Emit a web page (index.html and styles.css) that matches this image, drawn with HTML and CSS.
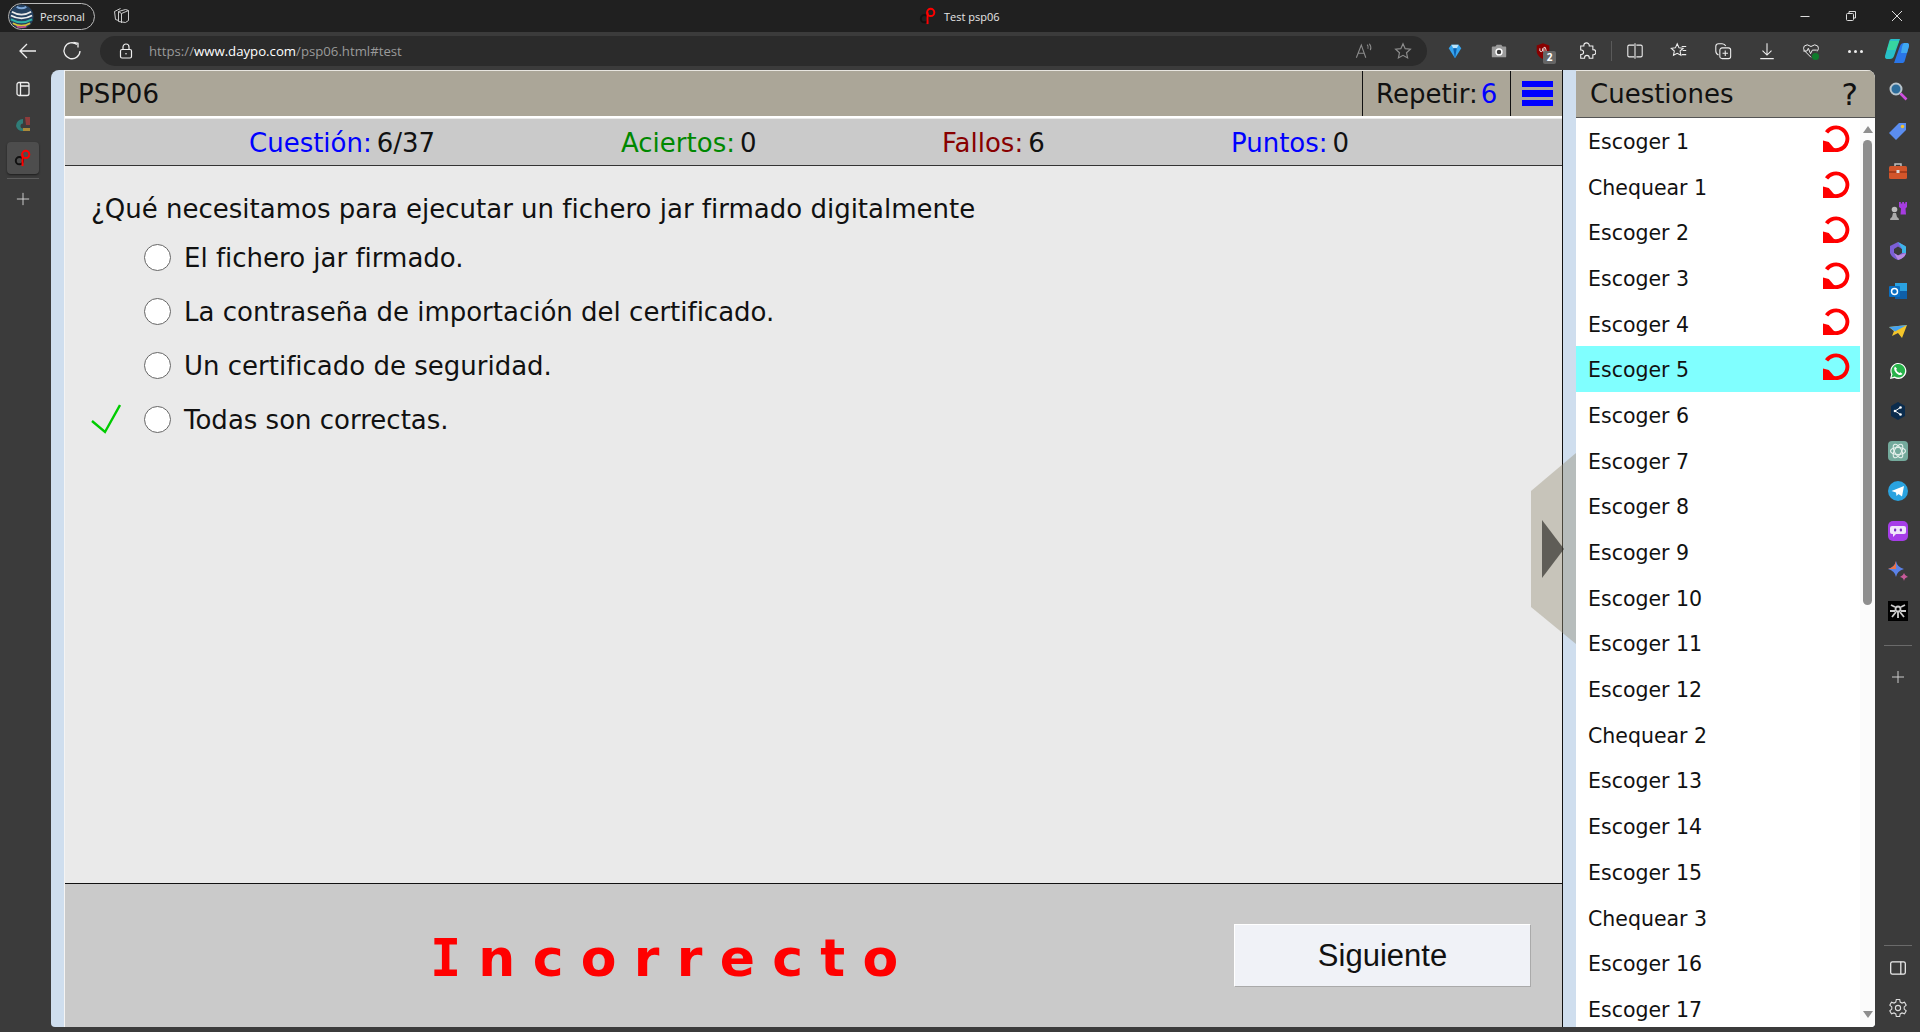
FILE: index.html
```html
<!DOCTYPE html>
<html lang="es">
<head>
<meta charset="UTF-8" />
<title>Test psp06</title>
<link rel="stylesheet" href="styles.css">
</head>
<body>
<svg class="defs" width="0" height="0">
  <symbol id="redo" viewBox="0 0 28 28">
    <path d="M3.700 7.200A11.800 11.800 0 1 1 8 24.200" fill="none" stroke="#f00" stroke-width="4"/>
    <path d="M0 15.500L6 17l6 7v3.500H0z" fill="#f00"/>
  </symbol>
  <symbol id="logo" viewBox="0 0 20 20">
    <circle cx="6" cy="13" r="4" fill="none" stroke="#111" stroke-width="2.2"/>
    <circle cx="13" cy="6" r="4" fill="none" stroke="#f00" stroke-width="2.2"/>
    <path d="M9.500 19L9.500 6" stroke="#f00" stroke-width="2.2"/>
  </symbol>
</svg>

<!-- window title bar -->
<div class="titlebar">
  <div class="profile">
    <svg class="avatar" viewBox="0 0 26 26">
      <circle cx="13" cy="13" r="12.500" fill="#25405f"/>
      <path d="M8 3q5 3 10 0" fill="none" stroke="#7fa8d8" stroke-width="2"/>
      <path d="M3 8q10 6 20 0" fill="none" stroke="#e8e8e8" stroke-width="1.800"/>
      <path d="M2 12q11 6 22 0" fill="none" stroke="#f0f0f0" stroke-width="1.800"/>
      <path d="M2 16q11 6 22 0" fill="none" stroke="#2fb4a8" stroke-width="2"/>
      <path d="M4 20q9 5 18 0" fill="none" stroke="#d9c23a" stroke-width="2"/>
      <path d="M8 23.500q5 1.500 10 0" fill="none" stroke="#d0508c" stroke-width="1.600"/>
    </svg>
    <span>Personal</span>
  </div>
  <svg class="tabs-icon" viewBox="0 0 18 18" fill="none" stroke="#ccc" stroke-width="1">
    <path d="M6.500 4.500l7-2 3 1v10l-3 2-7-1z"/><path d="M6.500 4.500l3 2v9.500M9.500 6.500l7-3"/><path d="M6.500 13.500l-3-1-1-8 6-3"/>
  </svg>
  <div class="win-title">
    <svg class="win-logo"><use href="#logo"/></svg>
    <span>Test psp06</span>
  </div>
  <div class="win-controls">
    <svg viewBox="0 0 12 12" stroke="#ddd" fill="none"><path d="M1.500 6.500h9"/></svg>
    <svg viewBox="0 0 12 12" stroke="#ddd" fill="none"><rect x="1.500" y="3.500" width="7" height="7" rx="1"/><path d="M4 3V1.500h6.500V8H9"/></svg>
    <svg viewBox="0 0 12 12" stroke="#ddd" fill="none"><path d="M1 1l10 10M11 1L1 11"/></svg>
  </div>
</div>

<!-- address bar row -->
<div class="toolbar">
  <div class="nav-btns">
    <svg viewBox="0 0 20 20" fill="none" stroke="#eee" stroke-width="1.300"><path d="M18 10H2M9 3l-7 7 7 7"/></svg>
    <svg viewBox="0 0 20 20" fill="none" stroke="#eee" stroke-width="1.300"><path d="M15 3.500A8 8 0 1 0 18 10"/><path d="M11.500 1.500l4.500.7v4.300" /></svg>
  </div>
  <div class="address">
    <svg class="lock" viewBox="0 0 16 16" fill="none" stroke="#eee" stroke-width="1.200"><rect x="2.500" y="6.500" width="11" height="8.500" rx="1.500"/><path d="M5 6.500V4a3 3 0 0 1 6 0v2.500"/><circle cx="8" cy="10.700" r=".8" fill="#eee" stroke="none"/></svg>
    <span class="url">https://<b>www.daypo.com</b>/psp06.html#test</span>
    <svg class="addr-icon" viewBox="0 0 20 20" fill="none" stroke="#8c8c8c" stroke-width="1.200"><path d="M1.500 17.500L7 3.500l5 14M3.500 12.500h7"/><path d="M13.500 3q2 2 .8 4.500M16 2q2.600 3.500 1 7"/></svg>
    <svg class="addr-icon" viewBox="0 0 20 20" fill="none" stroke="#8c8c8c" stroke-width="1.300"><path d="M10 2l2.400 5.400 5.800.6-4.300 3.900 1.200 5.800L10 14.800l-5.100 2.900 1.200-5.800L1.800 8l5.800-.6z"/></svg>
  </div>
  <div class="tools">
    <svg viewBox="0 0 20 20"><path d="M3 7l3-4h8l3 4-7 11z" fill="#35a4ef"/><path d="M6 3h8l-2 4H8z" fill="#b9e4fb"/><path d="M8 7h4l-2 11z" fill="#0d5fae"/></svg>
    <svg viewBox="0 0 20 20"><path d="M2 6a1 1 0 0 1 1-1h3l1.500-2h5L14 5h3a1 1 0 0 1 1 1v10a1 1 0 0 1-1 1H3a1 1 0 0 1-1-1z" fill="#9a9a9a"/><circle cx="10" cy="11" r="3.300" fill="#3b3b3b" stroke="#fff" stroke-width="1.600"/></svg>
    <div class="ublock">
      <svg viewBox="0 0 20 20"><path d="M10 1.500l7 2.500v7q-1 5-7 8-6-3-7-8V4z" fill="#800"/><path d="M6.500 7v3q1.500 1.500 3 0V7M11 6v5h1.500q2-1 0-5z" fill="none" stroke="#eee" stroke-width="1"/></svg>
      <span class="badge">2</span>
    </div>
    <svg viewBox="0 0 20 20" fill="none" stroke="#eee" stroke-width="1.200"><path d="M6.500 4.500V4a3 3 0 0 1 6 0v.5h4v4h.5a2.800 2.800 0 0 1 0 5.600h-.5V18h-4v-.5a2.600 2.600 0 0 0-5.200 0v.5H3v-4.200h.7a2.500 2.500 0 0 0 0-5H3V4.500z"/></svg>
    <i class="tool-sep"></i>
    <svg viewBox="0 0 20 20" fill="none" stroke="#eee" stroke-width="1.200"><path d="M9 3.500H3.500a1.500 1.500 0 0 0-1.500 1.500v10a1.500 1.500 0 0 0 1.500 1.500H9M11.500 3.500H16.500a1.500 1.500 0 0 1 1.500 1.500v10a1.500 1.500 0 0 1-1.500 1.500h-5M10 1.500v17"/></svg>
    <svg viewBox="0 0 20 20" fill="none" stroke="#eee" stroke-width="1.200"><path d="M8 2l2 4.500 4.500.5-3.300 3 .9 4.700L8 12.500l-4.100 2.200.9-4.700L1.500 7 6 6.500z"/><path d="M13 5h5M14 9.500h4M13 14h5"/></svg>
    <svg viewBox="0 0 20 20" fill="none" stroke="#eee" stroke-width="1.200"><path d="M5 14.500Q2 13 2 10V5q0-3 3-3h4q3 0 4 2.500"/><rect x="6.500" y="6.500" width="12" height="12" rx="2.500"/><path d="M12.500 9.500v6M9.500 12.500h6"/></svg>
    <svg viewBox="0 0 20 20" fill="none" stroke="#eee" stroke-width="1.200"><path d="M10 1.500v13M5 9.500l5 5 5-5M2.500 18.500h15"/></svg>
    <div class="health">
      <svg viewBox="0 0 20 20" fill="none" stroke="#eee" stroke-width="1.100"><path d="M10 17L2.500 9.500Q1 7 2.500 4.500 5.500 1.500 10 5q4.500-3.500 7.500-.5 1.500 2.500 0 5l-1 1"/><path d="M1.500 10h4l1.500-3 2.500 6 2-4h5"/></svg>
      <i class="health-dot"></i>
    </div>
    <span class="dots"><i></i><i></i><i></i></span>
    <svg class="copilot" viewBox="0 0 26 26"><path d="M7 1h9l-6 17q-1 3-4 3H2.500q-2-.5-1.500-3L5 4q.5-3 2-3z" fill="#28bfc9"/><path d="M6 3h9l-4 9H3z" fill="#37d6a0"/><path d="M19 25h-9l6-17q1-3 4-3h3.500q2 .5 1.500 3L21 22q-.5 3-2 3z" fill="#2a76e8"/><path d="M20 5h3.500q2 .5 1.500 3l-2 7h-6l1-6q.5-3 2-4z" fill="#3fa8f0"/></svg>
  </div>
</div>

<div class="browser-body">
  <!-- vertical tabs -->
  <div class="side-left">
    <svg class="side-tab" viewBox="0 0 16 16" fill="none" stroke="#eee" stroke-width="1.300"><rect x="2" y="1.500" width="12" height="13" rx="2"/><path d="M5.500 1.500v13M5.500 5h8.500" /></svg>
    <svg class="side-tab" viewBox="0 0 16 16"><path d="M1 10a7 7 0 0 1 7-7v4.500a2.500 2.500 0 0 0 0 5V15a7 7 0 0 1-7-5z" fill="#2f7d78"/><path d="M10 1h5v8h-4z" fill="#8e3b3b"/><path d="M8 12h7v3H8z" fill="#a98a3a"/></svg>
    <div class="side-active"><svg class="side-tab"><use href="#logo"/></svg></div>
    <i class="side-sep"></i>
    <svg class="side-plus" viewBox="0 0 16 16" stroke="#ddd" stroke-width="1"><path d="M8 1v14M1 8h14"/></svg>
  </div>

  <div class="page">
    <div class="main">
      <div class="head">
        <div class="head-title">PSP06</div>
        <div class="head-repeat">Repetir:<span class="blue">6</span></div>
        <div class="head-menu"><i></i><i></i><i></i></div>
      </div>
      <div class="stats">
        <div class="stat s1"><span class="blue">Cuestión:</span>6/37</div>
        <div class="stat s2"><span class="green">Aciertos:</span>0</div>
        <div class="stat s3"><span class="dred">Fallos:</span>6</div>
        <div class="stat"><span class="blue">Puntos:</span>0</div>
      </div>
      <div class="content">
        <div class="question">¿Qué necesitamos para ejecutar un fichero jar firmado digitalmente</div>
        <label class="answer"><span class="mark"></span><input type="radio" name="r"><span class="answer-text">El fichero jar firmado.</span></label>
        <label class="answer"><span class="mark"></span><input type="radio" name="r"><span class="answer-text">La contraseña de importación del certificado.</span></label>
        <label class="answer"><span class="mark"></span><input type="radio" name="r"><span class="answer-text">Un certificado de seguridad.</span></label>
        <label class="answer"><span class="mark"><svg viewBox="0 0 30 30" fill="none" stroke="#0c0" stroke-width="2.400"><path d="M1 17l13 11L29 1"/></svg></span><input type="radio" name="r"><span class="answer-text">Todas son correctas.</span></label>
      </div>
      <div class="foot">
        <div class="verdict"><span class="verdict-i">I</span>ncorrecto</div>
        <button class="next">Siguiente</button>
      </div>
    </div>

    <div class="list-wrap">
      <div class="list-head"><span>Cuestiones</span><span class="help">?</span></div>
      <div class="list-body">
        <ul class="list">
          <li>Escoger 1<svg class="redo"><use href="#redo"/></svg></li>
          <li>Chequear 1<svg class="redo"><use href="#redo"/></svg></li>
          <li>Escoger 2<svg class="redo"><use href="#redo"/></svg></li>
          <li>Escoger 3<svg class="redo"><use href="#redo"/></svg></li>
          <li>Escoger 4<svg class="redo"><use href="#redo"/></svg></li>
          <li class="current">Escoger 5<svg class="redo"><use href="#redo"/></svg></li>
          <li>Escoger 6</li>
          <li>Escoger 7</li>
          <li>Escoger 8</li>
          <li>Escoger 9</li>
          <li>Escoger 10</li>
          <li>Escoger 11</li>
          <li>Escoger 12</li>
          <li>Chequear 2</li>
          <li>Escoger 13</li>
          <li>Escoger 14</li>
          <li>Escoger 15</li>
          <li>Chequear 3</li>
          <li>Escoger 16</li>
          <li>Escoger 17</li>
        </ul>
        <div class="scroll">
          <i class="arrow-up"></i>
          <i class="thumb"></i>
          <i class="arrow-down"></i>
        </div>
      </div>
    </div>

    <!-- translucent tab that opens/closes the list -->
    <div class="toggle"><i></i></div>
  </div>

  <div class="side-right">
    <svg viewBox="0 0 20 20" fill="none"><circle cx="8" cy="8" r="5.500" fill="#2d6d9c" stroke="#b8c4cc" stroke-width="2"/><path d="M12.500 12.500l6 6" stroke="#d04fe0" stroke-width="2.600"/></svg>
    <svg viewBox="0 0 20 20"><path d="M1 12L11 2h7v7L8 19z" fill="#5b8df0"/><circle cx="14.500" cy="5.500" r="1.800" fill="#f2c230"/></svg>
    <svg viewBox="0 0 20 20"><path d="M7 5V3h6v2" fill="none" stroke="#c0c0c0" stroke-width="1.500"/><rect x="1" y="5" width="18" height="13" rx="1.500" fill="#d2552a"/><path d="M1 10h18v2H1z" fill="#a63d1c"/><rect x="8.500" y="9" width="3" height="3" fill="#ddd"/></svg>
    <svg viewBox="0 0 20 20"><circle cx="6.500" cy="8.500" r="2.800" fill="#bbb"/><path d="M2 19q0-2 2-3l1-4h3l1 4q2 1 2 3z" fill="#aaa"/><path d="M11 1h1.800v1.500h1.400V1H16v1.500h1.300V1H19v5l-1.500 1.500.5 6h-5.500l.5-6L11 6z" fill="#a63de0"/></svg>
    <svg viewBox="0 0 20 20"><path d="M10 1l7 4-3 3-4-2.500L6 8v4l4 2.500 4-2.500h4q-1 5-8 7-6-2-8-7V5z" fill="#7b5fd6"/><path d="M10 1l8 4.500V12h-4V8z" fill="#3db5e8"/><path d="M6 12l4 2.500 8-2.500q-1 5-8 7z" fill="#b98be0"/></svg>
    <svg viewBox="0 0 20 20"><path d="M7 2h12v16H7z" fill="#2aa1e0"/><path d="M7 10h12v8H7z" fill="#0f5fa8"/><rect x="1" y="5" width="11" height="11" rx="1" fill="#0a6fc2"/><circle cx="6.500" cy="10.500" r="3" fill="none" stroke="#fff" stroke-width="1.500"/></svg>
    <svg viewBox="0 0 20 20"><path d="M1 6l18-2-5 13-4-5-6 3 2-5z" fill="#f3c52a"/><path d="M1 6l18-2-12 6.500z" fill="#46a3f0"/></svg>
    <svg viewBox="0 0 20 20"><path d="M2 18l1.200-4.400A8 8 0 1 1 6.500 17z" fill="#fff"/><path d="M3.500 16.500l1-3.200a6.800 6.800 0 1 1 2.300 2.300z" fill="#27b24a"/><path d="M7 5.500Q5.500 7 6.500 9.500t4 4.200q2.500 1 4-.7l-2-1.800-1 .8q-2.500-1-3.300-3.300l.8-1z" fill="#fff"/></svg>
    <svg viewBox="0 0 20 20"><path d="M10 1l7 4v10l-7 4-7-4V5z" fill="#0b2c4d"/><circle cx="7" cy="10" r="1.300" fill="#fff"/><circle cx="12.500" cy="6.500" r="1.300" fill="#fff"/><circle cx="12.500" cy="13.500" r="1.300" fill="#fff"/><path d="M7 10l5.500-3.500M7 10l5.500 3.500" stroke="#fff"/></svg>
    <svg viewBox="0 0 20 20"><rect width="20" height="20" rx="4" fill="#74aa9c"/><g fill="none" stroke="#e6f0ec" stroke-width="1.100"><ellipse cx="10" cy="10" rx="7.500" ry="3.500"/><ellipse cx="10" cy="10" rx="7.500" ry="3.500" transform="rotate(60 10 10)"/><ellipse cx="10" cy="10" rx="7.500" ry="3.500" transform="rotate(120 10 10)"/></g></svg>
    <svg viewBox="0 0 20 20"><circle cx="10" cy="10" r="10" fill="#2aa3e0"/><path d="M3.500 10L16 5l-2 10.500-3.500-2.500-2 2-.5-3.500z" fill="#fff"/></svg>
    <svg viewBox="0 0 20 20"><rect width="20" height="20" rx="5" fill="#a63de8"/><path d="M4 5h12a2 2 0 0 1 2 2v4a2 2 0 0 1-2 2H8l-3 3v-3H4a2 2 0 0 1-2-2V7a2 2 0 0 1 2-2z" fill="#f0e6fa"/><rect x="6" y="7.500" width="2.200" height="3" rx="1" fill="#7a2cc2"/><rect x="11.800" y="7.500" width="2.200" height="3" rx="1" fill="#7a2cc2"/></svg>
    <svg viewBox="0 0 20 20"><path d="M8 0q1 6 8 8-7 2-8 8-1-6-8-8 7-2 8-8z" fill="#5b82e8"/><path d="M0 8q7-2 8-8v8z" fill="#e8734a"/><path d="M16 12q.5 2.500 4 4-3.500 .5-4 4-.5-3.500-4-4 3.500-1.500 4-4z" fill="#c85a9a"/></svg>
    <svg viewBox="0 0 20 20"><rect width="20" height="20" fill="#000"/><g stroke="#ccc" stroke-width="1.800" fill="none"><circle cx="10" cy="8" r="2.500"/><path d="M3 4l4 2M17 4l-4 2M2 10h5M18 10h-5M4 16l4-5M16 16l-4-5M10 11v6"/></g></svg>
    <i class="right-sep sep-top"></i>
    <svg class="mini" viewBox="0 0 14 14" stroke="#ccc"><path d="M7 1v12M1 7h12"/></svg>
    <i class="right-sep sep-bottom"></i>
    <svg class="mini-box" viewBox="0 0 16 16" fill="none" stroke="#eee" stroke-width="1.100"><rect x="1.500" y="2.500" width="13" height="11" rx="1.500"/><path d="M10.500 2.500v11"/></svg>
    <svg class="mini-box gear" viewBox="0 0 20 20" fill="none" stroke="#ddd" stroke-width="1.100"><circle cx="10" cy="10" r="2.600"/><path d="M8.300 1.500h3.400l.5 2.600 1.800 1 2.500-.9 1.700 3-2 1.700v2.200l2 1.700-1.700 3-2.500-.9-1.800 1-.5 2.600H8.300l-.5-2.600-1.800-1-2.500.9-1.700-3 2-1.700V8.900l-2-1.700 1.700-3 2.500.9 1.800-1z"/></svg>
  </div>
</div>
</body>
</html>
```

FILE: styles.css
```css
* {
  box-sizing: border-box;
}

html, body {
  margin: 0;
  padding: 0;
  height: 100%;
}

body {
  display: flex;
  flex-direction: column;
  height: 1032px;
  overflow: hidden;
  background-color: #3b3b3b;
  font-family: 'DejaVu Sans', sans-serif;
  color: #111;
}

.defs {
  position: absolute;
}

i {
  display: block;
}

/* browser frame */
.titlebar {
  display: flex;
  align-items: center;
  position: relative;
  height: 32px;
  padding-left: 8px;
  background-color: #202020;
  font-family: 'Open Sans', sans-serif;
  font-size: 11px;
  color: #e6e6e6;
}

.profile {
  display: flex;
  align-items: center;
  gap: 6px;
  width: 87px;
  height: 27px;
  border: 1px solid #bbb;
  border-radius: 14px;
}

.avatar {
  width: 25px;
  height: 25px;
}

.tabs-icon {
  width: 18px;
  height: 18px;
  margin-left: 17px;
}

.win-title {
  display: flex;
  align-items: center;
  gap: 7px;
  position: absolute;
  left: 919px;
  top: 7px;
}

.win-logo {
  width: 18px;
  height: 18px;
}

.win-controls {
  display: flex;
  gap: 34px;
  margin-left: auto;
  padding-right: 17px;
}

.win-controls svg {
  width: 12px;
  height: 12px;
}

.toolbar {
  display: flex;
  align-items: center;
  height: 38px;
  background-color: #3b3b3b;
}

.nav-btns {
  display: flex;
  flex: none;
  gap: 24px;
  width: 100px;
  padding-left: 18px;
}

.nav-btns svg {
  width: 20px;
  height: 20px;
}

.address {
  display: flex;
  flex: none;
  align-items: center;
  width: 1327px;
  height: 30px;
  padding: 0 15px 0 18px;
  border-radius: 15px;
  background-color: #2b2b2b;
  font-family: 'Open Sans', sans-serif;
  font-size: 13.200px;
}

.lock {
  width: 16px;
  height: 16px;
}

.url {
  flex: 1;
  margin-left: 15px;
  color: #9a9a9a;
}

.url b {
  font-weight: 400;
  color: #fff;
}

.addr-icon {
  width: 18px;
  height: 18px;
  margin-left: 21px;
}

.tools {
  display: flex;
  flex: none;
  align-items: center;
  gap: 26px;
  margin-left: 19px;
}

.tools > svg,
.ublock svg,
.health svg {
  display: block;
  width: 18px;
  height: 18px;
}

.tools > .copilot {
  width: 26px;
  height: 26px;
  margin-left: -6px;
}

.ublock,
.health {
  position: relative;
}

.badge {
  position: absolute;
  left: 9px;
  top: 9px;
  width: 13px;
  height: 13px;
  border-radius: 2px;
  background-color: #666;
  color: #fff;
  font: 700 10px/13px 'Open Sans', sans-serif;
  text-align: center;
}

.health-dot {
  position: absolute;
  left: 10px;
  top: 11px;
  width: 7px;
  height: 7px;
  border-radius: 50%;
  background-color: #0f7b2c;
}

.tool-sep {
  width: 1px;
  height: 20px;
  margin: 0 -11.500px;
  background-color: #5a5a5a;
}

.dots {
  display: flex;
  justify-content: center;
  gap: 3px;
  width: 18px;
}

.dots i {
  width: 3px;
  height: 3px;
  border-radius: 50%;
  background-color: #eee;
}

.browser-body {
  display: flex;
  height: 957px;
}

.side-left {
  display: flex;
  flex: none;
  flex-direction: column;
  align-items: center;
  width: 51px;
  padding: 11px 5px 0 0;
}

.side-left .side-tab {
  width: 16px;
  height: 16px;
}

.side-left > .side-tab + .side-tab {
  margin-top: 19px;
}

.side-active {
  display: flex;
  align-items: center;
  justify-content: center;
  width: 32px;
  height: 32px;
  margin-top: 10px;
  border-radius: 4px;
  background-color: #4d4d4d;
  box-shadow: 0 1px 2px rgba(0, 0, 0, 0.5);
}

.side-active .side-tab {
  width: 18px;
  height: 18px;
}

.side-sep {
  width: 32px;
  height: 1px;
  margin-top: 4px;
  background-color: #5c5c5c;
}

.side-plus {
  width: 14px;
  height: 14px;
  margin-top: 13px;
}

.side-right {
  display: flex;
  flex: none;
  flex-direction: column;
  align-items: center;
  width: 45px;
  padding: 0 0 9px 1px;
}

.side-right > svg {
  flex: none;
  width: 20px;
  height: 20px;
  margin-top: 20px;
}

.side-right > svg:first-child {
  margin-top: 11px;
}

.side-right > .mini {
  width: 14px;
  height: 14px;
  margin-top: 24px;
}

.side-right > .mini-box {
  width: 18px;
  height: 18px;
  margin-top: 13px;
}

.side-right > .gear {
  width: 20px;
  height: 20px;
  margin-top: 21px;
}

.right-sep {
  width: 28px;
  height: 1px;
  background-color: #6a6a6a;
}

.sep-top {
  margin-top: 24px;
}

.sep-bottom {
  margin-top: auto;
}

/* page */
.page {
  display: flex;
  flex: none;
  position: relative;
  width: 1824px;
  height: 957px;
  padding-left: 13px;
  border-radius: 8px 8px 4px 4px;
  overflow: hidden;
  background-color: #cfdeee;
}

.main {
  display: flex;
  flex: none;
  flex-direction: column;
  width: 1499px;
  height: 100%;
  margin-right: 13px;
  border-left: 1px solid #f4f4f4;
  border-right: 1px solid #111;
  background-color: #eaeaea;
}

.head {
  display: flex;
  height: 47px;
  margin-bottom: 2px;
  border-top: 1px solid #e8e6e0;
  border-bottom: 1px solid #fff;
  box-shadow: 0 1px 0 #fff;
  background-color: #aba698;
  font-size: 26px;
  line-height: 47px;
}

.head-title {
  flex: 1;
  padding-left: 13px;
}

.head-repeat {
  width: 148px;
  padding-left: 13px;
  border-left: 1px solid #111;
}

.head-repeat .blue {
  margin-left: 3px;
}

.head-menu {
  display: flex;
  flex-direction: column;
  justify-content: center;
  gap: 3px;
  width: 52px;
  padding-left: 11px;
  border-left: 1px solid #111;
}

.head-menu i {
  width: 31px;
  height: 6.500px;
  background-color: #00f;
}

.blue {
  color: #00f;
}

.green {
  color: #080;
}

.dred {
  color: #800;
}

.stats {
  display: flex;
  height: 47px;
  padding-left: 184px;
  border-bottom: 1px solid #333;
  background-color: #cacaca;
  font-size: 26px;
  line-height: 48px;
}

.stat span {
  margin-right: 5px;
}

.s1 {
  width: 372px;
}

.s2 {
  width: 321px;
}

.s3 {
  width: 289px;
}

.content {
  flex: 1;
  padding: 23px 0 0 26px;
}

.question {
  height: 41px;
  font-size: 26px;
  line-height: 40px;
}

.answer {
  display: flex;
  align-items: center;
  height: 54px;
  font-size: 26px;
}

.answer-text {
  padding-top: 2px;
}

.mark {
  width: 53px;
}

.mark svg {
  display: block;
  width: 30px;
  height: 30px;
}

.answer input {
  appearance: none;
  flex: none;
  width: 27px;
  height: 27px;
  margin: 0 13px 0 0;
  border: 1.500px solid #666;
  border-radius: 50%;
  background-color: #fff;
}

.foot {
  display: flex;
  align-items: center;
  height: 144px;
  border-top: 1px solid #111;
  background-color: #cacaca;
}

.verdict {
  width: 1169px;
  margin-top: 5px;
  padding-left: 365px;
  color: #f00;
  font-size: 52px;
  font-weight: 700;
  letter-spacing: 17.300px;
}

.verdict-i {
  font-family: 'DejaVu Sans Mono', monospace;
  letter-spacing: 17px;
}

.next {
  width: 297px;
  height: 63px;
  border: 1px solid #aaa;
  border-top-color: #fff;
  border-left-color: #fff;
  background-color: #f0f2f7;
  color: #111;
  font-family: 'Liberation Sans', sans-serif;
  font-size: 31px;
}

/* right list */
.list-wrap {
  display: flex;
  flex: none;
  flex-direction: column;
  width: 299px;
  border-radius: 0 8px 4px 0;
  background-color: #fff;
}

.list-head {
  display: flex;
  justify-content: space-between;
  height: 48px;
  padding: 0 17px 0 14px;
  border-top: 1px solid #e8e6e0;
  border-bottom: 1px solid #555;
  background-color: #aba698;
  font-size: 26px;
  line-height: 47px;
}

.help {
  font-size: 31px;
}

.list-body {
  display: flex;
  flex: 1;
  overflow: hidden;
}

.list {
  flex: 1;
  margin: 0;
  padding: 0;
  list-style: none;
  font-size: 20.500px;
}

.list li {
  display: flex;
  align-items: center;
  justify-content: space-between;
  height: 45.700px;
  padding: 2px 10px 0 12px;
}

.current {
  background-color: #80ffff;
}

.redo {
  width: 27px;
  height: 28px;
  margin-top: -6px;
}

.scroll {
  display: flex;
  flex-direction: column;
  align-items: center;
  width: 15px;
  padding-top: 8px;
  background-color: #fbfbfb;
}

.arrow-up,
.arrow-down {
  width: 0;
  height: 0;
  border-left: 5px solid transparent;
  border-right: 5px solid transparent;
}

.arrow-up {
  border-bottom: 7px solid #8e8e8e;
}

.arrow-down {
  margin-top: auto;
  margin-bottom: 9px;
  border-top: 7px solid #8e8e8e;
}

.thumb {
  width: 9px;
  height: 465px;
  margin-top: 7px;
  border-radius: 5px;
  background-color: #8e8e8e;
}

/* overlay tab, sits over the main/list seam */
.toggle {
  position: absolute;
  left: 1480px;
  top: 383px;
  width: 45px;
  height: 191px;
  background-color: rgba(150, 142, 118, 0.42);
  clip-path: polygon(0 38px, 100% 0, 100% 100%, 0 154px);
}

.toggle i {
  position: absolute;
  left: 11px;
  top: 67px;
  border-top: 29px solid transparent;
  border-bottom: 29px solid transparent;
  border-left: 22px solid rgba(40, 38, 34, 0.65);
}
```
